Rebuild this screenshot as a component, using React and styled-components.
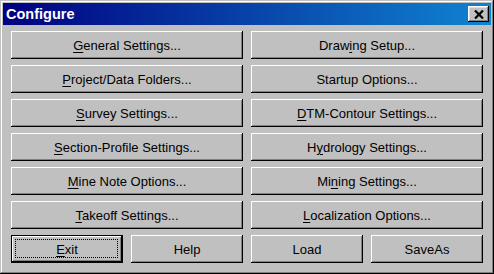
import React from 'react'
import styled, { createGlobalStyle } from 'styled-components'

const Global = createGlobalStyle`
  html, body {
    margin: 0;
    padding: 0;
    background: #c0c0c0;
  }
  * { box-sizing: border-box; }
`

const Window = styled.div`
  width: 494px;
  height: 274px;
  padding: 3px;
  background: #c0c0c0;
  box-shadow: inset -1px -1px #000, inset 1px 1px #c0c0c0,
    inset -2px -2px #808080, inset 2px 2px #fff;
  display: flex;
  flex-direction: column;
  font-family: "Liberation Sans", Arial, sans-serif;
`

const TitleBar = styled.div`
  height: 22px;
  flex: none;
  display: flex;
  align-items: center;
  justify-content: space-between;
  padding: 0 2px 0 3px;
  background: linear-gradient(to right, #000080, #1084d0);
  color: #fff;
  font-weight: bold;
  font-size: 14.5px;
`

const CloseButton = styled.button`
  width: 21px;
  height: 16px;
  padding: 0;
  border: none;
  background: #c0c0c0;
  display: flex;
  align-items: center;
  justify-content: center;
  box-shadow: inset -1px -1px #000, inset 1px 1px #fff,
    inset -2px -2px #808080, inset 2px 2px #dfdfdf;
`

const Body = styled.div`
  flex: 1;
  padding: 6px 5px 5px 8px;
  display: grid;
  grid-template-columns: 232px 232px;
  grid-auto-rows: 28px;
  column-gap: 8px;
  row-gap: 6px;
`

const ButtonRow = styled.div`
  display: grid;
  grid-template-columns: 112px 112px;
  column-gap: 8px;
`

const Button = styled.button`
  position: relative;
  height: 28px;
  padding: 0;
  margin: 0;
  border: ${p => (p.$default ? '1px solid #000' : 'none')};
  background: #c0c0c0;
  color: #000;
  font-family: "Liberation Sans", Arial, sans-serif;
  font-size: 13px;
  text-align: center;
  box-shadow: inset -1px -1px #000, inset 1px 1px #fff,
    inset -2px -2px #808080, inset 2px 2px #c0c0c0;

  &::after {
    content: '';
    display: ${p => (p.$default ? 'block' : 'none')};
    position: absolute;
    left: 3px;
    top: 3px;
    right: 4px;
    bottom: 4px;
    border: 1px dotted #000;
  }
`

const Key = styled.span`
  text-decoration: underline;
  text-underline-offset: 2px;
`

const Label = ({ text, k }) => {
  if (k == null) return text
  return (
    <>
      {text.slice(0, k)}
      <Key>{text[k]}</Key>
      {text.slice(k + 1)}
    </>
  )
}

const settings = [
  ['General Settings...', 0],
  ['Drawing Setup...', 4],
  ['Project/Data Folders...', 0],
  ['Startup Options...', null],
  ['Survey Settings...', 0],
  ['DTM-Contour Settings...', 0],
  ['Section-Profile Settings...', 0],
  ['Hydrology Settings...', 1],
  ['Mine Note Options...', 0],
  ['Mining Settings...', 2],
  ['Takeoff Settings...', 0],
  ['Localization Options...', 0],
]

export default function App() {
  return (
    <>
      <Global />
      <Window>
        <TitleBar>
          <span>Configure</span>
          <CloseButton aria-label="Close">
            <svg width="10" height="9" viewBox="0 0 10 9">
              <path d="M1 0.5 L9 8.5 M9 0.5 L1 8.5" stroke="#000" strokeWidth="2.2" />
            </svg>
          </CloseButton>
        </TitleBar>
        <Body>
          {settings.map(([text, k]) => (
            <Button key={text}>
              <Label text={text} k={k} />
            </Button>
          ))}
          <ButtonRow>
            <Button $default>
              <Label text="Exit" k={0} />
            </Button>
            <Button>Help</Button>
          </ButtonRow>
          <ButtonRow>
            <Button>Load</Button>
            <Button>SaveAs</Button>
          </ButtonRow>
        </Body>
      </Window>
    </>
  )
}
